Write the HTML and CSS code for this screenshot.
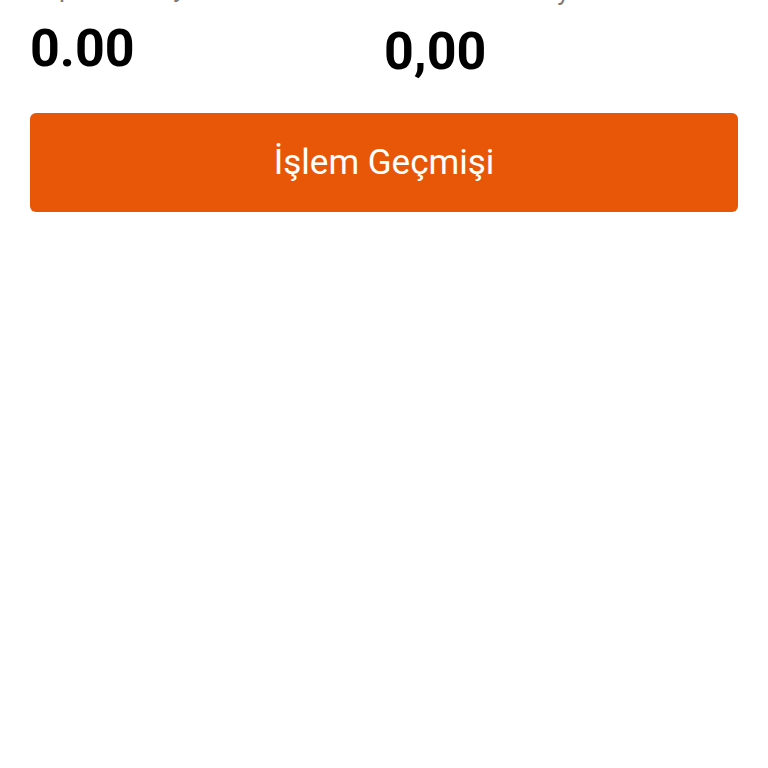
FILE: index.html
```html
<!DOCTYPE html>
<html lang="tr">

<head>
    <meta charset="UTF-8">
    <title>Bakiye</title>
    <link rel="stylesheet" href="styles.css">
</head>

<body>

    <section id="bakiye">
        <div class="kolon">
            <p class="etiket">Toplam Bakiye</p>
            <p class="tutar">0.00</p>
        </div>
        <div class="kolon kalan">
            <p class="etiket">YTL Kalan Bakiye</p>
            <p class="tutar">0,00</p>
        </div>
    </section>

    <button class="gecmis">İşlem Geçmişi</button>

</body>

</html>
```

FILE: styles.css
```css
body {
    margin: 0;
    padding: 0 30px;
    background-color: white;
    font-family: Roboto, "Liberation Sans", sans-serif;
}

#bakiye {
    display: grid;
    grid-template-columns: 1fr 1fr;
    align-items: start;
    margin-top: -27px;
}

.etiket {
    margin: 0;
    font-size: 26px;
    line-height: 30px;
    color: #7a7a7a;
}

.tutar {
    margin: 20px 0 0 0;
    font-size: 52px;
    line-height: 52px;
    font-weight: bold;
    color: black;
}

.kalan {
    padding-top: 3px;
}

.gecmis {
    display: block;
    width: 100%;
    height: 99px;
    margin-top: 35px;
    border: none;
    border-radius: 6px;
    background-color: #e85708;
    color: white;
    font-family: Roboto, "Liberation Sans", sans-serif;
    font-size: 35px;
    padding: 0;
}
```
